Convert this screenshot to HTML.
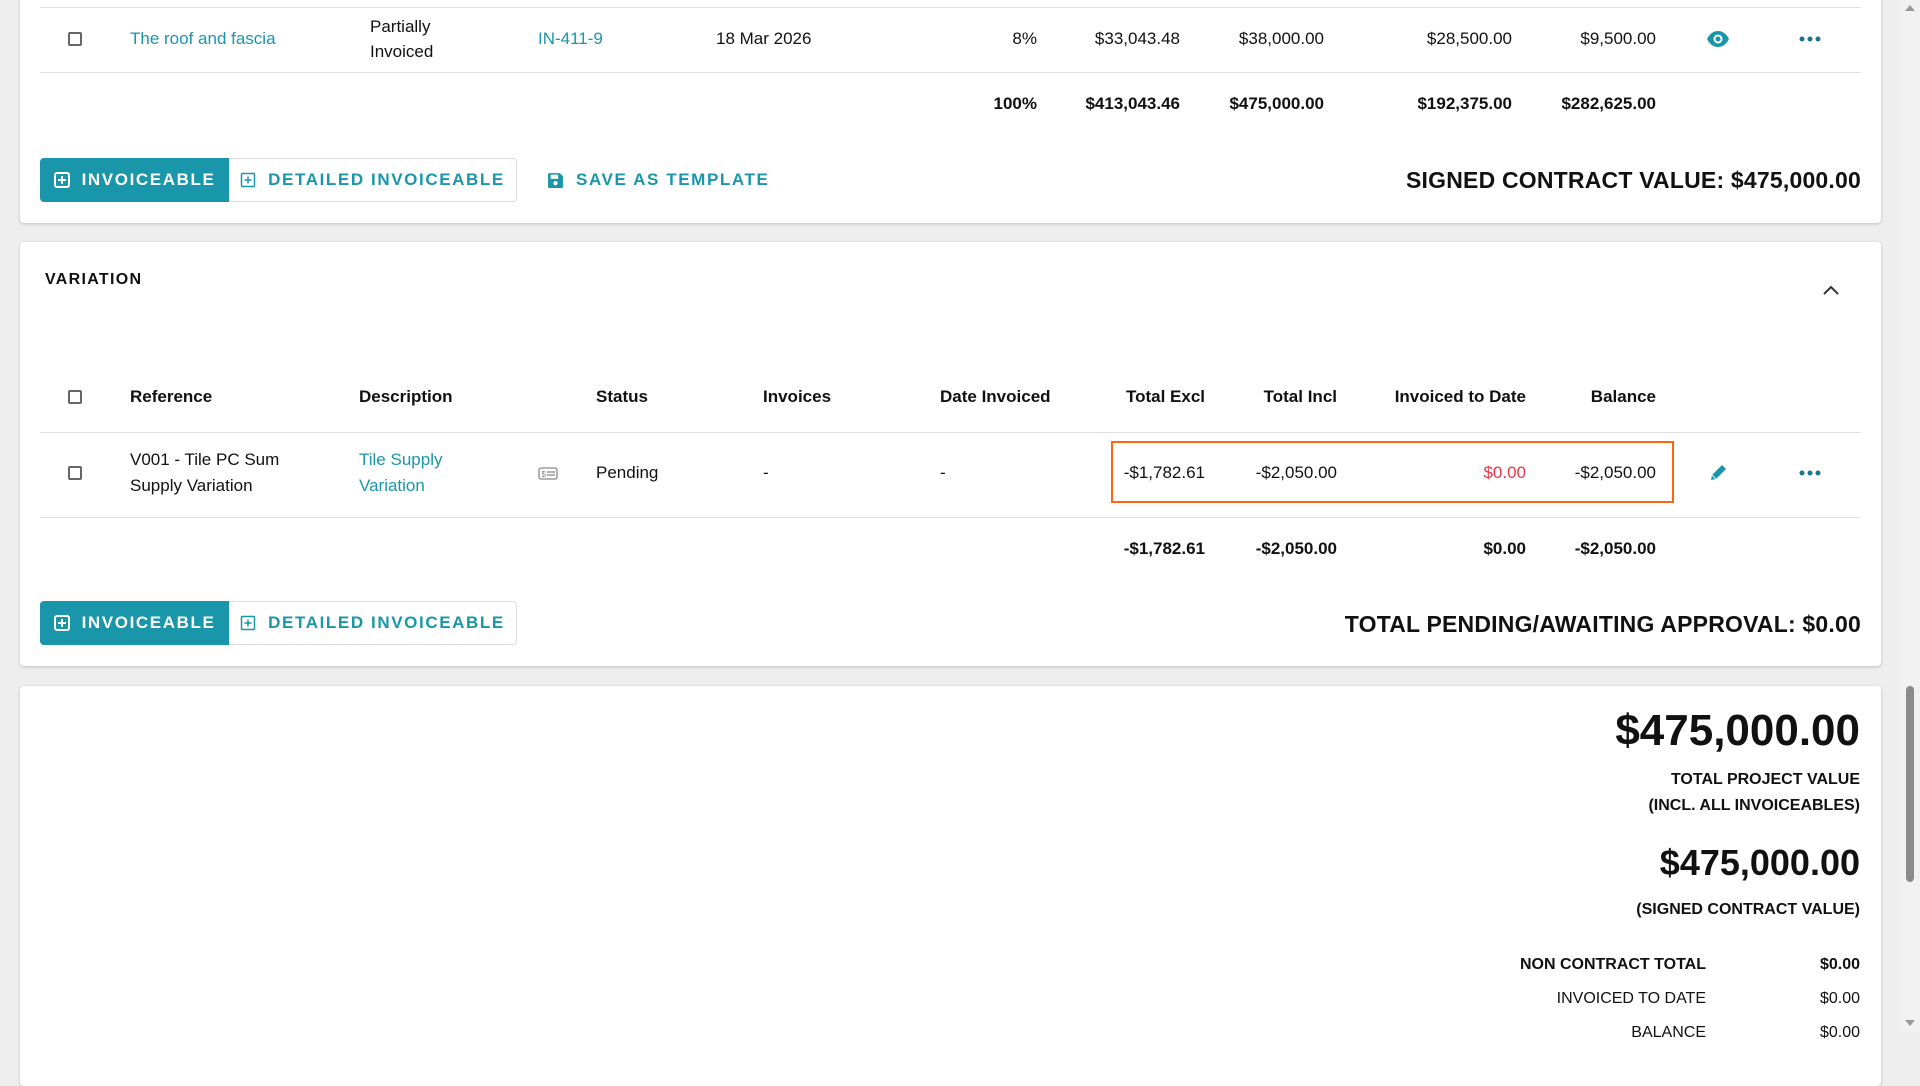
<!DOCTYPE html>
<html><head><meta charset="utf-8"><style>
*{margin:0;padding:0;box-sizing:border-box}
body{width:1920px;height:1032px;background:#eeeeee;font-family:"Liberation Sans",Arial,sans-serif;color:#111;overflow:hidden;position:relative}
.card{position:absolute;left:20px;width:1861px;background:#fff;border-radius:4px;box-shadow:0 1px 3px rgba(0,0,0,.2)}
.t{position:absolute;white-space:nowrap;transform:translateY(-50%);font-size:17px;line-height:26px}
.r{text-align:right}
.b{font-weight:bold}
.link{color:#1a96aa}
.hr{position:absolute;left:40px;width:1821px;height:1px;background:#e0e0e0}
.cb{position:absolute;width:14px;height:14px;border:2px solid #666;border-radius:2px;transform:translateY(-50%)}
.btn{position:absolute;height:44px;display:flex;align-items:center;justify-content:center;font-size:17px;font-weight:bold;letter-spacing:1.6px;color:#1a96aa}
.btn.f{background:#1a96aa;color:#fff;border-radius:4px 0 0 4px}
.btn.o{border:1px solid #ddd;border-left:none;border-radius:0 4px 4px 0}
.btn svg{margin-right:12px}
.dots{position:absolute;transform:translate(-50%,-50%);display:flex;gap:3px}
.dots i{width:5px;height:5px;border-radius:50%;background:#1a7590;display:block}
</style></head><body>

<!-- card 1 -->
<div class="card" style="top:-10px;height:233px"></div>
<div class="hr" style="top:7px"></div>
<div class="cb" style="left:68px;top:39px"></div>
<div class="t link" style="left:130px;top:39px">The roof and fascia</div>
<div class="t" style="left:370px;top:39px;white-space:normal;line-height:25px">Partially<br>Invoiced</div>
<div class="t link" style="left:538px;top:39px">IN-411-9</div>
<div class="t" style="left:716px;top:39px">18 Mar 2026</div>
<div class="t r" style="right:883px;top:39px">8%</div>
<div class="t r" style="right:740px;top:39px">$33,043.48</div>
<div class="t r" style="right:596px;top:39px">$38,000.00</div>
<div class="t r" style="right:408px;top:39px">$28,500.00</div>
<div class="t r" style="right:264px;top:39px">$9,500.00</div>
<svg style="position:absolute;left:1706px;top:30px" width="24" height="18" viewBox="0 0 24 18"><path d="M1 9C4 3 8 1 12 1s8 2 11 8c-3 6-7 8-11 8S4 15 1 9z" fill="#1a96aa"/><circle cx="12" cy="9" r="4.5" fill="#fff"/><circle cx="12" cy="9" r="2.5" fill="#1a96aa"/></svg>
<div class="dots" style="left:1810px;top:39px"><i></i><i></i><i></i></div>
<div class="hr" style="top:72px"></div>
<div class="t r b" style="right:883px;top:104px">100%</div>
<div class="t r b" style="right:740px;top:104px">$413,043.46</div>
<div class="t r b" style="right:596px;top:104px">$475,000.00</div>
<div class="t r b" style="right:408px;top:104px">$192,375.00</div>
<div class="t r b" style="right:264px;top:104px">$282,625.00</div>

<div class="btn f" style="left:40px;top:158px;width:189px"><svg width="16" height="16" viewBox="0 0 16 16"><rect x="1" y="1" width="14" height="14" rx="2" fill="none" stroke="#fff" stroke-width="2"/><path d="M8 4v8M4 8h8" stroke="#fff" stroke-width="2"/></svg>INVOICEABLE</div>
<div class="btn o" style="left:229px;top:158px;width:288px"><svg width="16" height="16" viewBox="0 0 16 16"><rect x="1.5" y="1.5" width="13" height="13" rx="1" fill="none" stroke="#1a96aa" stroke-width="1.5"/><path d="M8 4.5v7M4.5 8h7" stroke="#1a96aa" stroke-width="1.5"/></svg>DETAILED INVOICEABLE</div>
<div class="btn" style="left:547px;top:158px;width:230px;justify-content:flex-start"><svg width="17" height="17" viewBox="0 0 16 16"><path d="M1 2a1 1 0 011-1h10l3 3v10a1 1 0 01-1 1H2a1 1 0 01-1-1z" fill="#1a96aa"/><rect x="3.5" y="2.5" width="7" height="4" fill="#fff"/><circle cx="8" cy="10.5" r="2" fill="#fff"/></svg>SAVE AS TEMPLATE</div>
<div class="t b" style="right:59px;top:180px;font-size:23px;letter-spacing:.2px">SIGNED CONTRACT VALUE: $475,000.00</div>

<!-- card 2 -->
<div class="card" style="top:242px;height:424px"></div>
<div class="t b" style="left:45px;top:280px;font-size:16px;letter-spacing:1.3px">VARIATION</div>
<svg style="position:absolute;left:1822px;top:284px" width="18" height="12" viewBox="0 0 18 12"><path d="M2 10l7-7 7 7" fill="none" stroke="#333" stroke-width="2"/></svg>
<div class="cb" style="left:68px;top:397px"></div>
<div class="t b" style="left:130px;top:397px">Reference</div>
<div class="t b" style="left:359px;top:397px">Description</div>
<div class="t b" style="left:596px;top:397px">Status</div>
<div class="t b" style="left:763px;top:397px">Invoices</div>
<div class="t b" style="left:940px;top:397px">Date Invoiced</div>
<div class="t b r" style="right:715px;top:397px">Total Excl</div>
<div class="t b r" style="right:583px;top:397px">Total Incl</div>
<div class="t b r" style="right:394px;top:397px">Invoiced to Date</div>
<div class="t b r" style="right:264px;top:397px">Balance</div>
<div class="hr" style="top:432px"></div>
<div class="cb" style="left:68px;top:473px"></div>
<div class="t" style="left:130px;top:473px;line-height:26px">V001 - Tile PC Sum<br>Supply Variation</div>
<div class="t link" style="left:359px;top:473px;line-height:26px">Tile Supply<br>Variation</div>
<svg style="position:absolute;left:538px;top:467px" width="20" height="13" viewBox="0 0 20 13"><rect x="1" y="1" width="18" height="11" rx="2" fill="none" stroke="#888" stroke-width="1.3"/><text x="3.5" y="10" font-size="8" fill="#888" font-family="Liberation Sans">$</text><path d="M9 5h8M9 8h8" stroke="#888" stroke-width="1.3"/></svg>
<div class="t" style="left:596px;top:473px">Pending</div>
<div class="t" style="left:763px;top:473px">-</div>
<div class="t" style="left:940px;top:473px">-</div>
<div style="position:absolute;left:1111px;top:441px;width:563px;height:62px;border:2px solid #ff6411"></div>
<div class="t r" style="right:715px;top:473px">-$1,782.61</div>
<div class="t r" style="right:583px;top:473px">-$2,050.00</div>
<div class="t r" style="right:394px;top:473px;color:#ee3344">$0.00</div>
<div class="t r" style="right:264px;top:473px">-$2,050.00</div>
<svg style="position:absolute;left:1708px;top:463px" width="20" height="20" viewBox="0 0 20 20"><path d="M3 17l1-5L14 2l4 4L8 16z" fill="#1a96aa"/><path d="M4 12l4 4" stroke="#fff" stroke-width="1"/></svg>
<div class="dots" style="left:1810px;top:473px"><i></i><i></i><i></i></div>
<div class="hr" style="top:517px"></div>
<div class="t r b" style="right:715px;top:549px">-$1,782.61</div>
<div class="t r b" style="right:583px;top:549px">-$2,050.00</div>
<div class="t r b" style="right:394px;top:549px">$0.00</div>
<div class="t r b" style="right:264px;top:549px">-$2,050.00</div>
<div class="btn f" style="left:40px;top:601px;width:189px"><svg width="16" height="16" viewBox="0 0 16 16"><rect x="1" y="1" width="14" height="14" rx="2" fill="none" stroke="#fff" stroke-width="2"/><path d="M8 4v8M4 8h8" stroke="#fff" stroke-width="2"/></svg>INVOICEABLE</div>
<div class="btn o" style="left:229px;top:601px;width:288px"><svg width="16" height="16" viewBox="0 0 16 16"><rect x="1.5" y="1.5" width="13" height="13" rx="1" fill="none" stroke="#1a96aa" stroke-width="1.5"/><path d="M8 4.5v7M4.5 8h7" stroke="#1a96aa" stroke-width="1.5"/></svg>DETAILED INVOICEABLE</div>
<div class="t b" style="right:59px;top:624px;font-size:23px;letter-spacing:.2px">TOTAL PENDING/AWAITING APPROVAL: $0.00</div>

<!-- card 3 -->
<div class="card" style="top:686px;height:400px"></div>
<div class="t r" style="right:60px;top:731px;font-size:44px;line-height:50px;font-weight:bold">$475,000.00</div>
<div class="t r b" style="right:60px;top:780px;font-size:16px">TOTAL PROJECT VALUE</div>
<div class="t r b" style="right:60px;top:806px;font-size:16px">(INCL. ALL INVOICEABLES)</div>
<div class="t r" style="right:60px;top:863px;font-size:36px;line-height:44px;font-weight:bold">$475,000.00</div>
<div class="t r b" style="right:60px;top:910px;font-size:16px">(SIGNED CONTRACT VALUE)</div>
<div class="t r b" style="right:214px;top:965px;font-size:16px">NON CONTRACT TOTAL</div>
<div class="t r b" style="right:60px;top:965px;font-size:16px">$0.00</div>
<div class="t r" style="right:214px;top:999px;font-size:16px">INVOICED TO DATE</div>
<div class="t r" style="right:60px;top:999px;font-size:16px">$0.00</div>
<div class="t r" style="right:214px;top:1033px;font-size:16px">BALANCE</div>
<div class="t r" style="right:60px;top:1033px;font-size:16px">$0.00</div>

<!-- scrollbar -->
<div style="position:absolute;left:1900px;top:0;width:20px;height:1032px;background:#f1f1f1"></div>
<div style="position:absolute;left:1906px;top:686px;width:8px;height:196px;background:#8a8a8a;border-radius:4px"></div>
<div style="position:absolute;left:1905px;top:5px;width:0;height:0;border-left:5px solid transparent;border-right:5px solid transparent;border-bottom:6px solid #999"></div>
<div style="position:absolute;left:1905px;top:1020px;width:0;height:0;border-left:5px solid transparent;border-right:5px solid transparent;border-top:6px solid #999"></div>
</body></html>
